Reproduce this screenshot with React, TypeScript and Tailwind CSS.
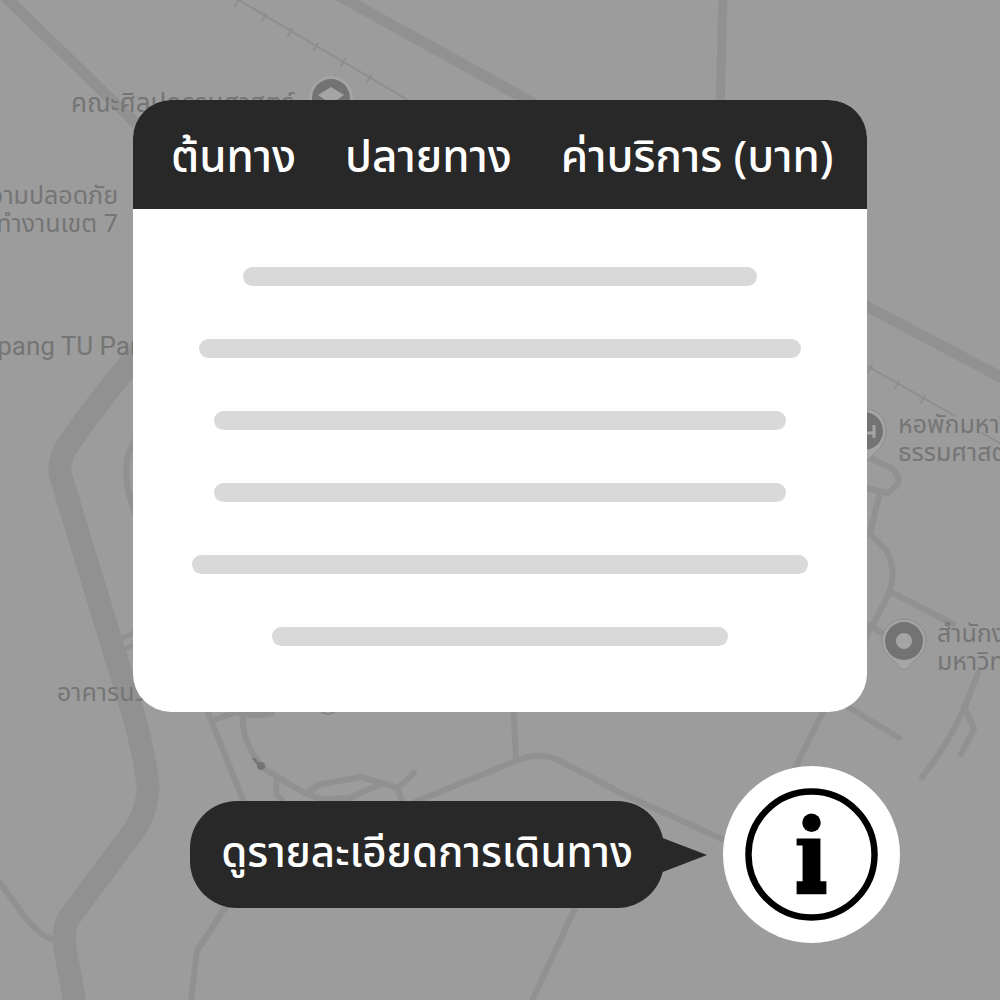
import React from "react";

const fontStack = "font-['Noto_Sans','Noto_Sans_Thai','Prompt',sans-serif]";

const columns = ["ต้นทาง", "ปลายทาง", "ค่าบริการ (บาท)"];

const rows = ["w-[70%]", "w-[82%]", "w-[78%]", "w-[78%]", "w-[84%]", "w-[62%]"];

const labels = [
  { place: "left-[71px] top-[88px] text-[26px]", lines: ["คณะศิลปกรรมศาสตร์"] },
  { place: "right-[882px] top-[180px] text-right text-[25px]", lines: ["ความปลอดภัย", "ที่ทำงานเขต 7"] },
  {
    place: "right-[848px] top-[332px] text-right text-[26px] font-['Roboto',sans-serif]",
    lines: ["Lampang TU Park"],
  },
  { place: "left-[57px] top-[677px] text-[25px]", lines: ["อาคารนวัตกรรม"] },
  { place: "left-[898px] top-[409px] text-[25px]", lines: ["หอพักมหาวิทยาลัย", "ธรรมศาสตร์"] },
  { place: "left-[937px] top-[618px] text-[25px]", lines: ["สำนักงาน", "มหาวิทยาลัย"] },
];

function MapBackground() {
  return (
    <div className="absolute inset-0 overflow-hidden" aria-hidden="true">
      <svg
        className="h-full w-full"
        viewBox="0 0 1000 1000"
        preserveAspectRatio="xMidYMid slice"
        fill="none"
        stroke="#919191"
        strokeLinecap="round"
        strokeLinejoin="round"
      >
        <g strokeWidth="11">
          <path d="M-4 -12 L145 132" />
          <path d="M325 -12 L560 118 L870 308 L1010 382" />
          <path d="M723 -5 L720 110" strokeWidth="9" />
        </g>
        <path
          d="M150 341 Q102 394 66 448 Q57 465 61 477 L128 697 Q143 744 148 785 Q149 804 136 828 L69 918 Q61 932 66 955 L76 1008"
          strokeWidth="23"
        />
        <g strokeWidth="2" stroke="#8e8e8e">
          <path d="M232 -4 L450 125 M860 362 L955 416 M982 433 L1005 446" />
          <path d="M239 -1 l-4 7 M266 14 l-4 7 M292 29 l-4 7 M318 43 l-4 7 M345 59 l-4 7 M371 75 l-4 7 M872 365 l-4 7 M899 381 l-4 7 M925 396 l-4 7" />
        </g>
        <g strokeWidth="6">
          <path d="M138 437 C122 455 123 485 138 522" />
          <path d="M118 640 L142 629 M121 650 L142 642" strokeWidth="5" />
          <path d="M-5 876 L25 917 Q40 936 54 940" />
          <path d="M205 705 L247 810 M214 720 L245 709" />
          <path d="M244 708 Q240 728 250 748 Q256 761 266 770 L306 794 L318 785 L361 777 L398 788 L414 773 M277 778 L276 794 L282 800 M306 794 L322 799 L350 798 L378 785 M398 788 L403 806" />
          <path d="M240 713 Q258 717 272 713" />
          <path d="M415 802 L521 759 Q539 752 558 760 L625 795 L722 839" />
          <path d="M513 700 L516 758" />
          <path d="M228 903 L197 951 L190 1008 M578 902 L530 1005" />
          <path d="M825 708 L793 772 M845 705 L899 738" />
          <path d="M866 456 L889 467 Q902 475 897 485 L888 493 L864 488 M879 496 L870 534 L886 550 Q896 568 891 586 L888 596 L862 645 M891 592 L953 624 M870 625 L887 637" />
          <path d="M978 673 L964 709 Q948 744 922 777 M964 706 L974 729 L961 754" />
        </g>
        <path d="M254 759 L262 768" stroke="#777777" strokeWidth="3" />
        <circle cx="261" cy="766" r="4" fill="#737373" stroke="none" />
        <path d="M320 711 Q328 717 336 711" stroke="#858585" strokeWidth="2" fill="#a5a5a5" />

        <circle cx="331" cy="98" r="22" fill="#a5a5a5" stroke="none" />
        <circle cx="331" cy="98" r="19" fill="#737373" stroke="none" />
        <path d="M318 95 L331 87 L344 95 L331 104 Z M323 101 L331 107 L339 101" fill="#a5a5a5" stroke="none" />

        <path
          d="M866 409 C878 409 886 419 886 431 C886 445 876 451 867 461 L848 445 Z"
          fill="#a5a5a5"
          stroke="#8c8c8c"
          strokeWidth="1"
        />
        <circle cx="864" cy="431" r="19" fill="#737373" stroke="none" />
        <path d="M858 433 H875 M874 425 V438" stroke="#a5a5a5" strokeWidth="3" strokeLinecap="butt" />

        <path
          d="M904 619 C892 619 882 629 882 641 C882 654 893 658 899 667 Q904 672 909 667 C915 658 926 654 926 641 C926 629 916 619 904 619 Z"
          fill="#a5a5a5"
          stroke="#8c8c8c"
          strokeWidth="1"
        />
        <circle cx="904" cy="641" r="19" fill="#737373" stroke="none" />
        <circle cx="904" cy="641" r="8" fill="#a5a5a5" stroke="none" />
      </svg>
      {labels.map((label) => (
        <p
          key={label.lines[0]}
          className={`absolute leading-7 whitespace-nowrap text-[#757575] ${label.place}`}
        >
          {label.lines.map((line) => (
            <span key={line} className="block">
              {line}
            </span>
          ))}
        </p>
      ))}
    </div>
  );
}

function FareTable() {
  return (
    <div className="mx-[33px] overflow-hidden rounded-[38px] bg-white pb-[66px]">
      <table className="w-full border-collapse">
        <thead className="bg-[#282828] text-white">
          <tr className="h-[109px]">
            {columns.map((name) => (
              <th
                key={name}
                scope="col"
                className="px-6 text-left text-[44px] leading-[60px] font-medium whitespace-nowrap first:pl-[38px] last:pr-8"
              >
                {name}
              </th>
            ))}
          </tr>
        </thead>
        <tbody>
          {rows.map((width, i) => (
            <tr key={i}>
              <td colSpan={3} className={i === 0 ? "pt-[58px]" : "pt-[53px]"}>
                <div className={`mx-auto h-[19px] rounded-full bg-[#d9d9d9] ${width}`} />
              </td>
            </tr>
          ))}
        </tbody>
      </table>
    </div>
  );
}

function InfoRow() {
  return (
    <div className="mt-[54px] flex items-center justify-end">
      <label
        htmlFor="trip-info"
        className="flex h-[107px] items-center rounded-[47px] bg-[#282828] px-[31px] pb-2 text-[42px] leading-[60px] font-medium whitespace-nowrap text-white"
      >
        ดูรายละเอียดการเดินทาง
      </label>
      <svg className="-ml-1 mr-4 h-9 w-[47px] shrink-0" viewBox="0 0 47 36" fill="#282828">
        <path d="M0 0 L47 18 L0 36 Z" />
      </svg>
      <button
        id="trip-info"
        type="button"
        className="flex size-[177px] shrink-0 items-center justify-center rounded-full bg-white text-black"
      >
        <svg className="size-[133px]" viewBox="0 0 134 134" fill="currentColor">
          <circle cx="67" cy="67" r="63.5" fill="none" stroke="currentColor" strokeWidth="6.5" />
          <circle cx="67" cy="35" r="9.3" />
          <path d="M52 51 H76 V94 H82 V107 H52 V94 H58 V58 H52 Z" />
        </svg>
      </button>
    </div>
  );
}

export default function App() {
  return (
    <div className={`relative min-h-screen overflow-hidden bg-[#9c9c9c] ${fontStack}`}>
      <MapBackground />
      <main className="relative px-[100px] pt-[100px] pb-14">
        <FareTable />
        <InfoRow />
      </main>
    </div>
  );
}
